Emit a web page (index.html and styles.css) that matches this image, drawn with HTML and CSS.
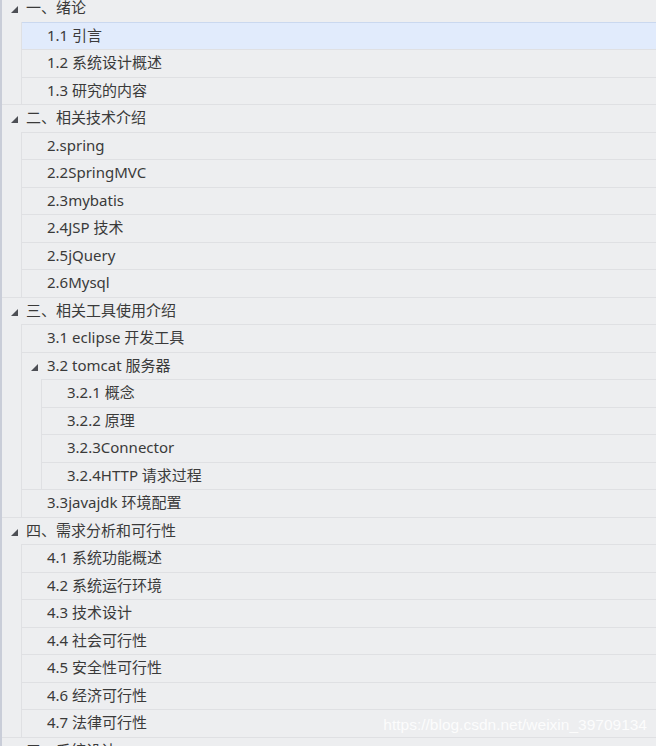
FILE: index.html
```html
<!DOCTYPE html>
<html lang="zh">
<head>
  <meta charset="UTF-8" />
  <title>目录</title>
  <link rel="stylesheet" href="styles.css">
</head>
<body>
  <div class="tree">
    <div class="node">
      <div class="row"><span class="caret"></span>一、绪论</div>
      <div class="children">
        <div class="row active">1.1 引言</div>
        <div class="row">1.2 系统设计概述</div>
        <div class="row">1.3 研究的内容</div>
      </div>
    </div>

    <div class="node">
      <div class="row"><span class="caret"></span>二、相关技术介绍</div>
      <div class="children">
        <div class="row">2.spring</div>
        <div class="row">2.2SpringMVC</div>
        <div class="row">2.3mybatis</div>
        <div class="row">2.4JSP 技术</div>
        <div class="row">2.5jQuery</div>
        <div class="row">2.6Mysql</div>
      </div>
    </div>

    <div class="node">
      <div class="row"><span class="caret"></span>三、相关工具使用介绍</div>
      <div class="children">
        <div class="row">3.1 eclipse 开发工具</div>
        <div class="node">
          <div class="row"><span class="caret"></span>3.2 tomcat 服务器</div>
          <div class="children">
            <div class="row">3.2.1 概念</div>
            <div class="row">3.2.2 原理</div>
            <div class="row">3.2.3Connector</div>
            <div class="row">3.2.4HTTP 请求过程</div>
          </div>
        </div>
        <div class="row">3.3javajdk 环境配置</div>
      </div>
    </div>

    <div class="node">
      <div class="row"><span class="caret"></span>四、需求分析和可行性</div>
      <div class="children">
        <div class="row">4.1 系统功能概述</div>
        <div class="row">4.2 系统运行环境</div>
        <div class="row">4.3 技术设计</div>
        <div class="row">4.4 社会可行性</div>
        <div class="row">4.5 安全性可行性</div>
        <div class="row">4.6 经济可行性</div>
        <div class="row">4.7 法律可行性</div>
      </div>
    </div>

    <div class="node">
      <div class="row"><span class="caret"></span>五、系统设计</div>
    </div>
  </div>

  <div class="watermark">https://blog.csdn.net/weixin_39709134</div>
</body>
</html>
```

FILE: styles.css
```css
html, body {
  margin: 0;
  padding: 0;
  height: 100%;
  overflow: hidden;
}

body {
  background-color: #edeef0;
  font-family: "Noto Sans", "Noto Sans CJK SC", sans-serif;
  font-size: 15px;
  color: #3a3a3a;
  border-left: 2px solid #c9cdd8;
  position: relative;
}

.tree {
  margin-top: -6px;
}

.row {
  height: 27.5px;
  box-sizing: border-box;
  line-height: 25px;
  border-top: 1px solid #dfe0e3;
  padding-left: 24px;
  position: relative;
  white-space: nowrap;
}

.children {
  margin-left: 19px;
  border-left: 1px solid #dfe0e3;
}

.children .row {
  padding-left: 25px;
}

.row.active {
  background-color: #e1ebfc;
  border-top: 1px solid #cad8ef;
  border-bottom: 1px solid #cad8ef;
  height: 28.5px;
  margin-bottom: -1px;
}

.caret {
  position: absolute;
  left: 9px;
  top: 11px;
  width: 0;
  height: 0;
  border-left: 7px solid transparent;
  border-bottom: 7px solid #4d4f55;
}

.watermark {
  position: absolute;
  right: 9px;
  bottom: 12px;
  font-family: "Liberation Sans", Arial, sans-serif;
  font-size: 15.5px;
  color: rgba(255, 255, 255, 0.85);
}
```
